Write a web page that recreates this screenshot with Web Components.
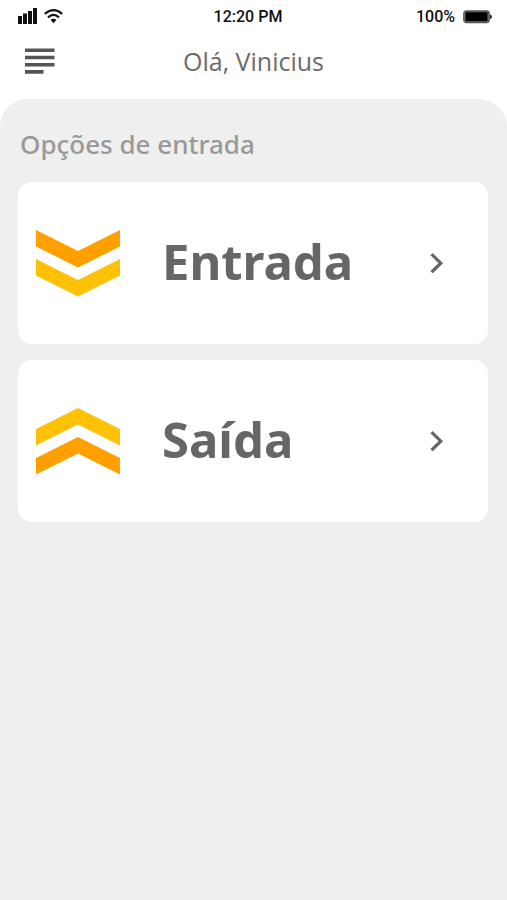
<!DOCTYPE html>
<html lang="pt-BR">
<head>
<meta charset="utf-8">
<meta name="viewport" content="width=device-width, initial-scale=1">
<title>Opções de entrada</title>
<style>
  html, body { margin: 0; background: #fff; }
  body { font-family: "Noto Sans", "Open Sans", sans-serif; color: #666; }
</style>
</head>
<body>
<app-screen>
  <status-bar slot="top" time="12:20 PM" battery="100%"></status-bar>
  <app-header slot="top">Olá, Vinicius</app-header>
  <span slot="heading">Opções de entrada</span>
  <option-card direction="down">Entrada</option-card>
  <option-card direction="up">Saída</option-card>
</app-screen>

<script>
class StatusBar extends HTMLElement {
  connectedCallback() {
    this.attachShadow({ mode: "open" }).innerHTML = `
      <style>
        :host { display: grid; grid-template-columns: 1fr auto 1fr; align-items: center;
          height: 32px; padding: 0 15px 0 18px; color: #111;
          font: 500 16px/20px Roboto, sans-serif; }
        svg { display: block; }
        div { display: flex; align-items: center; }
        .left { gap: 7px; }
        .right { justify-content: flex-end; gap: 8px; }
        .time, .right { padding-top: 1px; }
        .time { padding-right: 14px; }
      </style>
      <div class="left">
        <svg width="19" height="16" viewBox="0 0 19 16" fill="#111" aria-hidden="true">
          <path d="M0 8h4v8H0zM5 5.500h4V16H5zM10 3h4v13h-4zM15 0h4v16h-4z"/>
        </svg>
        <svg width="19" height="15" viewBox="0 0 19 15" fill="none" stroke="#111" stroke-width="2.200" aria-hidden="true">
          <path d="M.8 4.800Q9.500-2.400 18.200 4.800M4 8.300Q9.500 3.500 15 8.300"/>
          <path d="M6.600 10.800Q9.500 8.600 12.400 10.800L9.500 14.200z" fill="#111" stroke="none"/>
        </svg>
      </div>
      <span class="time">${this.getAttribute("time")}</span>
      <div class="right">
        <span>${this.getAttribute("battery")}</span>
        <svg width="29" height="14" viewBox="0 0 29 14" aria-hidden="true">
          <rect x=".8" y="1" width="25.400" height="11.600" rx="2.500" fill="#777" stroke="#555" stroke-width="1.300"/>
          <rect x="2.500" y="2.300" width="22" height="9" rx="1" fill="#000"/>
          <path d="M27 4.500q2 .3 2 2.300t-2 2.300z" fill="#222"/>
        </svg>
      </div>`;
  }
}

class AppHeader extends HTMLElement {
  connectedCallback() {
    this.attachShadow({ mode: "open" }).innerHTML = `
      <style>
        :host { display: grid; grid-template-columns: 32px 1fr 32px; align-items: center;
          height: 58px; padding: 0 24px; }
        button { display: block; border: 0; padding: 0; background: none; cursor: pointer; }
        svg { display: block; }
        h1 { margin: 0; text-align: center; font: 500 25px/32px "Open Sans", sans-serif; color: #6b6b6b; }
      </style>
      <button type="button" aria-label="Menu">
        <svg width="32" height="28" viewBox="0 0 32 28" stroke="#555" stroke-width="3.600" aria-hidden="true">
          <path d="M1 3.300h29.500M1 10.500h29.500M1 17.700h29.500M1 24.900h18.500"/>
        </svg>
      </button>
      <h1><slot></slot></h1>`;
  }
}

class AppScreen extends HTMLElement {
  connectedCallback() {
    this.attachShadow({ mode: "open" }).innerHTML = `
      <style>
        :host { display: flex; flex-direction: column; min-height: 100vh; }
        header { padding-bottom: 9px; }
        main { flex: 1; background: #efefef; border-radius: 28px 28px 0 0; padding: 29px 19px 24px 18px; }
        h2 { margin: 0 0 22px 2px; font: 500 26px/32px "Noto Sans", sans-serif; color: #999; }
        nav { display: flex; flex-direction: column; gap: 16px; }
      </style>
      <header><slot name="top"></slot></header>
      <main>
        <h2><slot name="heading"></slot></h2>
        <nav><slot></slot></nav>
      </main>`;
  }
}

class OptionCard extends HTMLElement {
  connectedCallback() {
    const shape = this.getAttribute("direction") === "down"
      ? `<path fill="#ffa000" d="M0 0 42 21 84 0v16.500L42 37.500 0 16.500z"/>
         <path fill="#ffc107" d="M0 29 42 50 84 29v16.500L42 66.500 0 45.500z"/>`
      : `<path fill="#ffc107" d="M0 21 42 0 84 21V37.500L42 16.500 0 37.500z"/>
         <path fill="#ffa000" d="M0 50 42 29 84 50V66.500L42 45.500 0 66.500z"/>`;
    this.attachShadow({ mode: "open" }).innerHTML = `
      <style>
        :host { display: block; }
        button { display: flex; align-items: center; box-sizing: border-box; width: 100%;
          min-height: 162px; padding: 0 44px 0 18px; border: 0; border-radius: 14px; background: #fff;
          font: 700 49px/64px "Noto Sans", sans-serif; color: #666; text-align: left; cursor: pointer; }
        svg { display: block; flex: none; }
        .label { flex: 1; padding: 0 0 4px 42px; }
      </style>
      <button type="button">
        <svg width="84" height="67" viewBox="0 0 84 67" aria-hidden="true">${shape}</svg>
        <span class="label"><slot></slot></span>
        <svg width="14" height="20" viewBox="0 0 14 20" fill="none" stroke="#666" stroke-width="3.200" aria-hidden="true">
          <path d="M1.500 1.200 10.800 10.200 1.500 19.200"/>
        </svg>
      </button>`;
  }
}

customElements.define("status-bar", StatusBar);
customElements.define("app-header", AppHeader);
customElements.define("app-screen", AppScreen);
customElements.define("option-card", OptionCard);
</script>
</body>
</html>
